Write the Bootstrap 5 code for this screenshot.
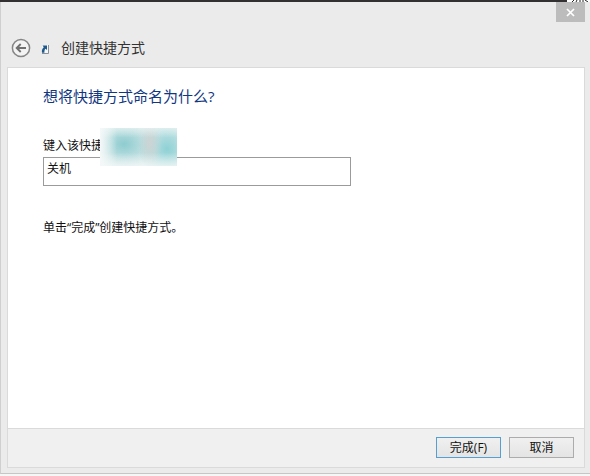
<!DOCTYPE html>
<html lang="zh-CN">
<head>
<meta charset="utf-8">
<meta name="viewport" content="width=device-width, initial-scale=1">
<title>创建快捷方式</title>
<link href="https://cdn.jsdelivr.net/npm/bootstrap@5.3.0/dist/css/bootstrap.min.css" rel="stylesheet">
<style>
body{font-family:"Open Sans","Noto Sans CJK SC",sans-serif;font-size:12px;line-height:16px;color:#111;background:#f6f6f6}
.backdrop-strip{height:2px;background:#333031}
.backdrop-peek{width:23px;background:#fff}
.wizard{background:#ebebeb;border-left:1px solid #cfcfcf;border-bottom:1px solid #c6c6c6;padding:0 5px 5px 6px;margin-bottom:2px}
.close-key{width:29px;height:20px;background:#bcbcbc}
.heading-bar{height:45px;padding:6px 4px 0}
.wizard-title{padding-left:2px;font-size:14px;line-height:20px;color:#333}
.sheet{background:#fff;border:1px solid #dadada;padding:17px 35px}
.question{font-size:15px;line-height:22px;color:#12377f}
.name-field{margin-top:30px;max-width:308px}
.name-label{line-height:18px}
.name-input{height:29px;margin-top:2px;padding:0 3px 7px;border:1px solid #9b9b9b;font-size:12px;line-height:18px;color:#111}
.smudge{left:57px;top:-9px;width:77px;height:38px;background:
linear-gradient(90deg,#f4f8f8 0,#f4f8f800 22%),
linear-gradient(0deg,#f4f8f8bb 0,#f4f8f800 35%),
linear-gradient(180deg,#f4f8f888 0,#f4f8f800 25%),
radial-gradient(ellipse 12px 26px at 50px 15px,#cdd3d3 0,#cdd3d300 100%),
radial-gradient(ellipse 28px 32px at 67px 21px,#8ed1d5 0,#8ed1d500 100%),
radial-gradient(ellipse 34px 26px at 24px 16px,#8eccd0 0,#8eccd000 100%),
#dcebeb}
.hint{margin-top:33px;line-height:18px}
.actions{background:#f0f0f0;border:1px solid #dadada;border-top:0;padding:8px 10px 9px;gap:8px}
.dialog-key{width:65px;height:21px;padding:0;border:1px solid #acacac;background:linear-gradient(#f0f0f0,#e4e4e4);font-size:12px;line-height:18px;color:#111}
.dialog-key.is-default{border-color:#569fd0}
</style>
<script src="https://cdn.jsdelivr.net/npm/bootstrap@5.3.0/dist/js/bootstrap.bundle.min.js" defer></script>
</head>
<body class="d-flex flex-column min-vh-100">
<div class="backdrop-strip d-flex justify-content-end overflow-hidden" aria-hidden="true"><div class="backdrop-peek d-flex align-items-end ps-1">
<svg width="19" height="2" viewBox="0 0 19 2"><path d="M1 2L3 0M6 0L5 2M9 0V2M12 0V2M14 0L17 2" stroke="#222" fill="none"/></svg></div></div>
<main class="wizard d-flex flex-column flex-grow-1">
<div class="d-flex justify-content-end">
<button type="button" class="close-key btn rounded-0 border-0 p-0 d-flex align-items-center justify-content-center" aria-label="关闭">
<svg width="9" height="9" viewBox="0 0 9 9"><path d="M1 1L8 8M8 1L1 8" stroke="#fff" stroke-width="1.7"/></svg>
</button>
</div>
<header class="heading-bar d-flex align-items-center">
<button type="button" class="btn border-0 p-0 d-flex" aria-label="返回">
<svg width="20" height="20" viewBox="0 0 20 20" fill="none"><circle cx="10" cy="10" r="8.6" fill="#f3f3f3" stroke="#858585" stroke-width="1.5"/><path d="M15 10H6M9.7 6L5.7 10L9.7 14" stroke="#707070" stroke-width="1.9"/></svg>
</button>
<svg class="ms-2 mt-1" width="12" height="9" viewBox="0 0 12 9"><path d="M3 0H9V8H3Z" fill="#f4f8fa"/><path d="M9.5 0V8.5H3" fill="none" stroke="#8a9097"/><path d="M3.5 .5H8V5L6.6 3.8C5.6 4.5 5.4 5.6 5.4 7.8H3C2.6 5.2 3.3 3.5 4.8 2.2Z" fill="#20588c"/></svg>
<h1 class="wizard-title fw-normal mb-0 ms-2">创建快捷方式</h1>
</header>
<section class="sheet flex-grow-1">
<h2 class="question fw-normal mb-0">想将快捷方式命名为什么?</h2>
<div class="name-field position-relative">
<label for="shortcut-name" class="name-label d-block">键入该快捷</label>
<input id="shortcut-name" type="text" class="name-input form-control rounded-0 shadow-none" value="关机">
<span class="smudge position-absolute" aria-hidden="true"></span>
</div>
<p class="hint mb-0">单击“完成”创建快捷方式。</p>
</section>
<footer class="actions d-flex justify-content-end">
<button type="button" class="dialog-key is-default btn rounded-0">完成(F)</button>
<button type="button" class="dialog-key btn rounded-0">取消</button>
</footer>
</main>
</body>
</html>
